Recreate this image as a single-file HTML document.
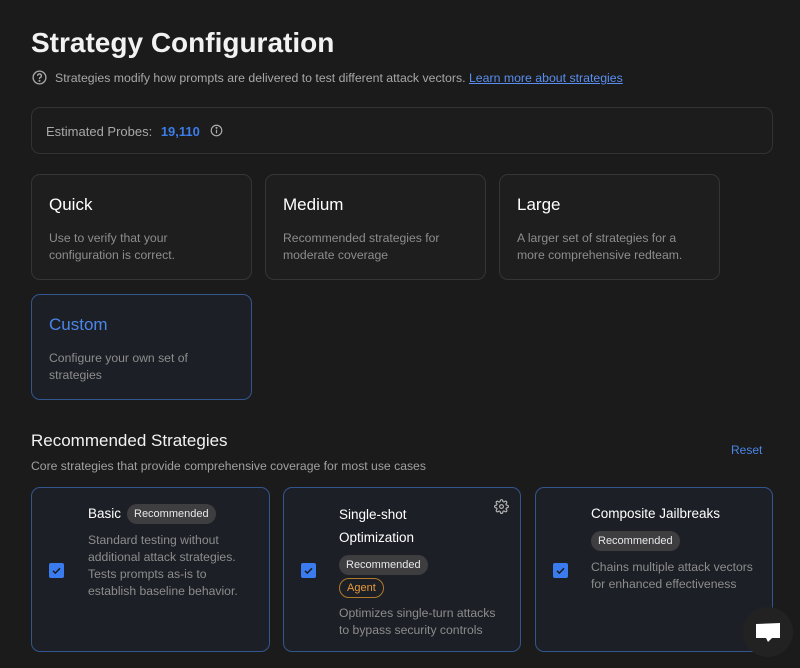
<!DOCTYPE html>
<html><head><style>
*{margin:0;padding:0;box-sizing:border-box}
body{width:800px;height:668px;background:#1b1b1b;font-family:"Liberation Sans",sans-serif;color:#fff;position:relative;overflow:hidden}
.a{position:absolute}
.card{position:absolute;border:1px solid #353535;border-radius:9px;background:#1e1e1e}
.card h3{position:absolute;left:17px;top:20px;font-size:17px;font-weight:normal;color:#fff}
.card p{position:absolute;left:17px;top:55px;font-size:12.2px;line-height:17px;color:#8d8d8d}
.sel{border-color:#34568e;background:#1c1f25}
.s{position:absolute;border:1px solid #34568e;border-radius:9px;background:#1c1f25;top:487px;height:165px}
.cb{position:absolute;width:15px;height:15px;background:#3a7cf0;border-radius:2px;top:75px;left:17px}
.cb svg{position:absolute;left:1px;top:1px}
.t{position:absolute;font-size:13.5px;color:#fff}
.d{position:absolute;font-size:12.2px;line-height:17px;color:#8d8d8d}
.pill{position:absolute;background:#3e3e40;border-radius:10px;font-size:11px;color:#e8e8e8;padding:3px 7px;line-height:14px}
</style></head><body>
<div class="a" style="left:31px;top:27px;font-size:28px;font-weight:bold;color:#f2f2f2">Strategy Configuration</div>
<svg class="a" style="left:32px;top:70px" width="15" height="15" viewBox="0 0 16 16" fill="none" stroke="#aaa" stroke-width="1.4"><circle cx="8" cy="8" r="6.8"/><path d="M6 6.2a2 2 0 1 1 2.6 1.9c-.5.2-.6.5-.6 1.1v.5"/><circle cx="8" cy="11.6" r=".4" fill="#aaa"/></svg>
<div class="a" style="left:55px;top:71px;font-size:12.3px;color:#a8a8a8">Strategies modify how prompts are delivered to test different attack vectors. <span style="color:#5a8ff0;text-decoration:underline">Learn more about strategies</span></div>
<div class="card" style="left:31px;top:107px;width:742px;height:47px;background:#1c1c1c;border-color:#333">
<div class="a" style="left:14px;top:16px;font-size:13px;color:#a8a8a8">Estimated Probes: <b style="color:#3b7de9;margin-left:5px">19,110</b></div>
<svg class="a" style="left:178px;top:16px" width="13" height="13" viewBox="0 0 16 16" fill="none" stroke="#aaa" stroke-width="1.5"><circle cx="8" cy="8" r="6.5"/><path d="M8 7v4.5"/><circle cx="8" cy="4.8" r=".5" fill="#aaa"/></svg>
</div>
<div class="card" style="left:31px;top:174px;width:221px;height:106px"><h3>Quick</h3><p>Use to verify that your<br>configuration is correct.</p></div>
<div class="card" style="left:265px;top:174px;width:221px;height:106px"><h3>Medium</h3><p>Recommended strategies for<br>moderate coverage</p></div>
<div class="card" style="left:499px;top:174px;width:221px;height:106px"><h3>Large</h3><p>A larger set of strategies for a<br>more comprehensive redteam.</p></div>
<div class="card sel" style="left:31px;top:294px;width:221px;height:106px"><h3 style="color:#4a86e8">Custom</h3><p>Configure your own set of<br>strategies</p></div>
<div class="a" style="left:31px;top:431px;font-size:17px;color:#f2f2f2">Recommended Strategies</div>
<div class="a" style="left:731px;top:443px;font-size:12px;color:#4a86e8">Reset</div>
<div class="a" style="left:31px;top:459px;font-size:12.2px;color:#a0a0a0">Core strategies that provide comprehensive coverage for most use cases</div>

<div class="s" style="left:31px;width:239px">
<div class="cb"><svg width="13" height="13" viewBox="0 0 13 13"><path d="M3 6.8l2.3 2.3L10 4.3" stroke="#1b1b1b" stroke-width="1.5" fill="none"/></svg></div>
<div class="t" style="left:56px;top:18px">Basic</div>
<div class="pill" style="left:95px;top:16px">Recommended</div>
<div class="d" style="left:56px;top:44px">Standard testing without<br>additional attack strategies.<br>Tests prompts as-is to<br>establish baseline behavior.</div>
</div>
<div class="s" style="left:283px;width:238px">
<div class="cb"><svg width="13" height="13" viewBox="0 0 13 13"><path d="M3 6.8l2.3 2.3L10 4.3" stroke="#1b1b1b" stroke-width="1.5" fill="none"/></svg></div>
<svg class="a" style="left:210px;top:11px" width="15" height="15" viewBox="0 0 24 24" fill="none" stroke="#bbb" stroke-width="1.8"><circle cx="12" cy="12" r="3"/><path d="M19.4 15a1.7 1.7 0 0 0 .3 1.8l.1.1a2 2 0 1 1-2.8 2.8l-.1-.1a1.7 1.7 0 0 0-1.8-.3 1.7 1.7 0 0 0-1 1.5V21a2 2 0 1 1-4 0v-.1a1.7 1.7 0 0 0-1.100-1.5 1.7 1.7 0 0 0-1.8.3l-.1.1a2 2 0 1 1-2.8-2.8l.1-.1a1.7 1.7 0 0 0 .3-1.8 1.7 1.7 0 0 0-1.5-1H3a2 2 0 1 1 0-4h.1a1.7 1.7 0 0 0 1.5-1.1 1.7 1.7 0 0 0-.3-1.8l-.1-.1a2 2 0 1 1 2.8-2.8l.1.1a1.7 1.7 0 0 0 1.8.3H9a1.7 1.7 0 0 0 1-1.5V3a2 2 0 1 1 4 0v.1a1.7 1.7 0 0 0 1 1.5 1.7 1.7 0 0 0 1.8-.3l.1-.1a2 2 0 1 1 2.8 2.8l-.1.1a1.7 1.7 0 0 0-.3 1.8V9a1.7 1.7 0 0 0 1.5 1H21a2 2 0 1 1 0 4h-.1a1.7 1.7 0 0 0-1.5 1z"/></svg>
<div class="t" style="left:55px;top:15px;line-height:23px">Single-shot<br>Optimization</div>
<div class="pill" style="left:55px;top:67px">Recommended</div>
<div class="pill" style="left:55px;top:90px;background:transparent;border:1px solid #b07a2a;color:#e79a3a;padding:2px 7px">Agent</div>
<div class="d" style="left:55px;top:117px">Optimizes single-turn attacks<br>to bypass security controls</div>
</div>
<div class="s" style="left:535px;width:238px">
<div class="cb"><svg width="13" height="13" viewBox="0 0 13 13"><path d="M3 6.8l2.3 2.3L10 4.3" stroke="#1b1b1b" stroke-width="1.5" fill="none"/></svg></div>
<div class="t" style="left:55px;top:18px">Composite Jailbreaks</div>
<div class="pill" style="left:55px;top:43px">Recommended</div>
<div class="d" style="left:55px;top:71px">Chains multiple attack vectors<br>for enhanced effectiveness</div>
</div>
<div class="a" style="left:743px;top:607px;width:50px;height:50px;border-radius:50%;background:#222"></div>
<svg class="a" style="left:755px;top:622px" width="26" height="22" viewBox="0 0 26 22"><path d="M1 2L25 1V16H17L13 20L11 16H1Z" fill="#fff"/></svg>
</body></html>
